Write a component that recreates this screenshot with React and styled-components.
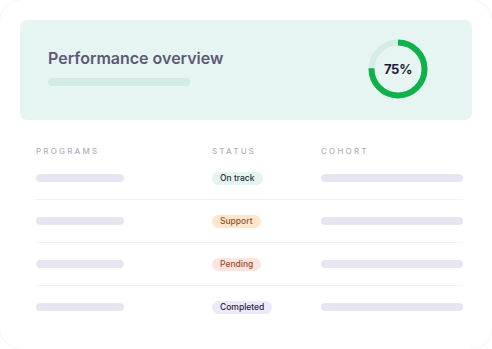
import React from 'react';
import styled, { createGlobalStyle } from 'styled-components';

const GlobalStyle = createGlobalStyle`
  html, body {
    margin: 0;
    padding: 0;
    background: #ffffff;
  }
  body {
    font-family: Inter, 'Noto Sans', sans-serif;
  }
`;

const rows = [
  { status: 'On track', tone: 'green' },
  { status: 'Support', tone: 'orange' },
  { status: 'Pending', tone: 'red' },
  { status: 'Completed', tone: 'purple' },
];

const tones = {
  green: { bg: '#e3f4ee', fg: '#2e2b44' },
  orange: { bg: '#fde6cb', fg: '#94552c' },
  red: { bg: '#fde5df', fg: '#9c4a2a' },
  purple: { bg: '#ece9fb', fg: '#2a2640' },
};

const ProgressRing = ({ value }) => {
  const r = 26.5;
  const c = 2 * Math.PI * r;
  return (
    <RingWrap>
      <svg width={60} height={60} viewBox="0 0 60 60">
        <circle cx={30} cy={30} r={r} fill="none" stroke="#d5ece5" strokeWidth={6} />
        <circle
          cx={30}
          cy={30}
          r={r}
          fill="none"
          stroke="#0fb14a"
          strokeWidth={6}
          strokeDasharray={`${(c * value) / 100} ${c}`}
          transform="rotate(-90 30 30)"
        />
      </svg>
      <RingLabel>{value}%</RingLabel>
    </RingWrap>
  );
};

const App = () => {
  return (
    <>
      <GlobalStyle />
      <Card>
        <Overview>
          <Heading>
            <Title>Performance overview</Title>
            <Bar $width={142} $color="#d2ebe4" />
          </Heading>
          <ProgressRing value={75} />
        </Overview>

        <Table>
          <HeaderRow>
            <HeadCell>Programs</HeadCell>
            <HeadCell>Status</HeadCell>
            <HeadCell>Cohort</HeadCell>
          </HeaderRow>
          {rows.map((row, i) => (
            <Row key={row.status} $last={i === rows.length - 1}>
              <Bar $width={88} $color="#e7e5f1" />
              <StatusCell>
                <Pill $tone={row.tone}>{row.status}</Pill>
              </StatusCell>
              <Bar $color="#e7e5f1" />
            </Row>
          ))}
        </Table>
      </Card>
    </>
  );
};

const Card = styled.div`
  box-sizing: border-box;
  width: 492px;
  height: 349px;
  border-radius: 22px;
  background: #ffffff;
  box-shadow: 0 0 2px rgba(210, 170, 190, 0.35);
  padding: 20px 20px 0;
`;

const Overview = styled.section`
  display: flex;
  align-items: center;
  justify-content: space-between;
  height: 100px;
  box-sizing: border-box;
  padding: 0 44px 0 28px;
  background: #e6f5f1;
  border-radius: 7px;
`;

const Heading = styled.div`
  margin-bottom: 7px;
`;

const Title = styled.h2`
  margin: 0 0 10px;
  font-size: 16px;
  line-height: 20px;
  font-weight: 600;
  color: #5e5977;
`;

const Bar = styled.div`
  height: 8px;
  width: ${(p) => (p.$width ? `${p.$width}px` : '100%')};
  border-radius: 4px;
  background: ${(p) => p.$color};
`;

const RingWrap = styled.div`
  position: relative;
  width: 60px;
  height: 60px;
  margin-top: -2px;

  svg {
    display: block;
  }
`;

const RingLabel = styled.span`
  position: absolute;
  inset: 0;
  display: flex;
  align-items: center;
  justify-content: center;
  font-size: 13px;
  font-weight: 700;
  color: #1f1b3b;
  letter-spacing: -0.3px;
`;

const Table = styled.div`
  padding: 25px 9px 0 16px;
`;

const grid = `
  display: grid;
  grid-template-columns: 176px 109px 1fr;
  align-items: center;
`;

const HeaderRow = styled.div`
  ${grid}
  height: 12px;
`;

const HeadCell = styled.span`
  font-size: 8px;
  font-weight: 500;
  letter-spacing: 2.2px;
  text-transform: uppercase;
  color: #b1afc0;
`;

const Row = styled.div`
  ${grid}
  height: 42px;
  border-bottom: ${(p) => (p.$last ? 'none' : '1px solid #f2f1f5')};
`;

const StatusCell = styled.div`
  display: flex;
  align-items: center;
`;

const Pill = styled.span`
  display: block;
  padding: 0 8px;
  height: 13px;
  line-height: 13px;
  border-radius: 7px;
  font-size: 8.5px;
  font-weight: 500;
  background: ${(p) => tones[p.$tone].bg};
  color: ${(p) => tones[p.$tone].fg};
`;

export default App;
